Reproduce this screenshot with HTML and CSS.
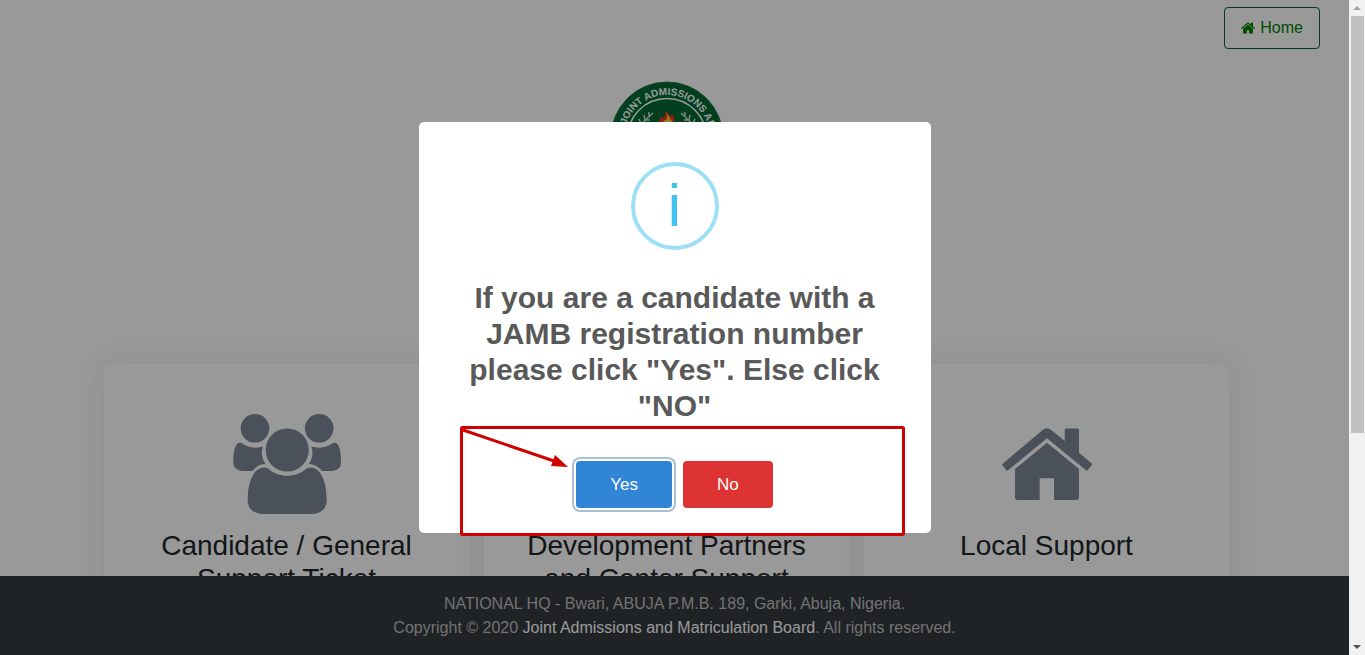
FILE: index.html
```html
<!DOCTYPE html>
<html lang="en">
<head>
<meta charset="utf-8">
<meta name="viewport" content="width=device-width, initial-scale=1">
<title>JAMB Support</title>
<link rel="stylesheet" href="styles.css">
</head>
<body>
<svg class="symbols" aria-hidden="true">
  <symbol id="house" viewBox="0 0 90 72">
    <path d="M1 35.5 41 1.8Q45 -1.4 49 1.8L62.7 13V1.5Q62.700 .5 64 .5H76Q77 .5 77 1.500V24.700L89.500 35.200Q90.300 36 89.700 36.900L85.800 42Q85 43 84 42.200L45 10.300 6 42.200Q5 43 4.200 42L.4 37.200Q-.2 36.300 1 35.500Z"/>
    <path d="M45 14.700 77 41V69Q77 72 74 72H52V50.300H37.700V72H16Q13 72 13 69V41Z"/>
  </symbol>
</svg>
<div class="window">
  <div class="page">
    <nav class="topbar">
      <a class="home-link" href="#"><svg class="home-icon" aria-hidden="true"><use href="#house"/></svg>Home</a>
    </nav>
    <main class="content">
      <div class="container">
        <svg class="logo" viewBox="0 0 114 114" role="img" aria-label="JAMB logo">
          <defs><path id="ring" d="M57 100A43 43 0 1 1 57.100 100"/></defs>
          <circle cx="57" cy="57" r="56" fill="#006b35" stroke="#347653"/>
          <circle cx="57" cy="57" r="39.500" fill="none" stroke="#fff" stroke-width="1.500"/>
          <text class="logo-text"><textPath href="#ring" startOffset="52%" text-anchor="middle">JOINT ADMISSIONS AND</textPath></text>
          <path d="M49 44Q48 38 52 35L53 38Q56 35 55 30Q60 32 60 36L62 33Q66 38 63 45Z" fill="#ed3524"/>
          <path d="M52 43Q52 40 56 39Q58 37 57 33Q61 37 60 40L62 38V45H52Z" fill="#ffd22e"/>
          <g class="laurel">
            <path d="M28 46 43 32M31 43 29 38M35 39 34 34M39 35 39 31M31 43 36 43M35 39 40 39"/>
            <path d="M86 46 71 32M83 43 85 38M79 39 80 34M75 35 75 31M83 43 78 43M79 39 74 39"/>
          </g>
        </svg>
        <section class="cards">
          <article class="card">
            <div class="card-icon">
              <svg class="icon-users" viewBox="0 0 108 100" aria-hidden="true">
                <circle cx="22" cy="14.300" r="14.300"/><circle cx="86.200" cy="14.300" r="14.300"/>
                <circle cx="54.200" cy="36" r="21.600"/>
                <path d="M6 28.800Q8 28.400 10 30C16 34 24 34.500 30 32.600Q27 42 32.500 50Q25 50 19.500 57H9Q.3 56 .3 48.500C.3 40 1.500 30 6 28.800Z"/>
                <path d="M102.400 28.800Q100.400 28.400 98.400 30C92.400 34 84.400 34.500 78.400 32.600Q81.400 42 75.900 50Q83.400 50 88.900 57H99.400Q108 56 108 48.500C108 40 106.900 30 102.400 28.800Z"/>
                <path d="M29 53.700Q32.500 53.200 35 54.500C46 64.200 62.500 64.200 73.500 54.500Q76 53.200 79.500 53.700C89 55.500 93.700 70 93.700 86Q93.700 98.500 80 100H28.500Q14.700 98.500 14.700 86C14.700 70 19.500 55.500 29 53.700Z"/>
              </svg>
            </div>
            <h3 class="card-title">Candidate / General Support Ticket</h3>
          </article>
          <article class="card">
            <div class="card-icon"></div>
            <h3 class="card-title">Development Partners and Center Support</h3>
          </article>
          <article class="card">
            <div class="card-icon"><svg class="icon-house" aria-hidden="true"><use href="#house"/></svg></div>
            <h3 class="card-title">Local Support</h3>
          </article>
        </section>
      </div>
    </main>
    <footer class="footer">
      <div>NATIONAL HQ - Bwari, ABUJA P.M.B. 189, Garki, Abuja, Nigeria.</div>
      <div>Copyright © 2020 <a class="footer-link" href="#">Joint Admissions and Matriculation Board</a>. All rights reserved.</div>
    </footer>
    <div class="overlay">
      <div class="dialog" role="dialog" aria-modal="true" aria-labelledby="dialog-title">
        <div class="dialog-icon" aria-hidden="true">i</div>
        <h2 class="dialog-title" id="dialog-title">If you are a candidate with a JAMB registration number please click "Yes". Else click "NO"</h2>
        <div class="actions">
          <button class="btn btn-yes" type="button">Yes</button>
          <button class="btn btn-no" type="button">No</button>
        </div>
        <svg class="callout" viewBox="0 0 445 110" aria-hidden="true">
          <rect x="1.500" y="1.500" width="442" height="107" rx="1" fill="none" stroke="#d00000" stroke-width="3"/>
          <path d="M3 4 94 35" stroke="#d00000" stroke-width="3"/>
          <path d="M108 41 95 29 91 40Z" fill="#d00000"/>
        </svg>
      </div>
    </div>
  </div>
  <div class="scrollbar" aria-hidden="true">
    <span class="arrow arrow-up"></span>
    <span class="track"><span class="thumb"></span></span>
    <span class="arrow arrow-down"></span>
  </div>
</div>
</body>
</html>
```
FILE: styles.css
```css
* { box-sizing: border-box; }
body {
  margin: 0;
  font: 16px/24px "Liberation Sans", Arial, sans-serif;
  color: #212529;
  background: #fff;
}
.symbols { display: none; }
.window { display: flex; height: 100vh; overflow: hidden; }
.page {
  position: relative;
  flex: 1;
  min-width: 0;
  display: flex;
  flex-direction: column;
}
.topbar { display: flex; justify-content: flex-end; padding: 7px 29px 0; }
.home-link {
  display: flex;
  align-items: center;
  gap: 5px;
  padding: 8px 16px;
  border: 1px solid #006633;
  border-radius: 4px;
  color: #008000;
  text-decoration: none;
}
.home-icon { width: 14px; height: 12px; fill: #008000; }
.content { flex: 1; min-height: 0; overflow: hidden; }
.container {
  max-width: 1125px;
  margin: 0 auto;
  padding-top: 32px;
}
@media (min-width: 1200px) {
  .content { padding-right: 16px; }
}
.logo { display: block; width: 114px; height: 114px; margin: 0 auto; }
.logo-text { font-size: 10px; font-weight: 700; fill: #fff; }
.laurel { fill: none; stroke: #cfe0d6; stroke-width: 1.5; }
.cards {
  display: grid;
  grid-template-columns: repeat(3, 1fr);
  gap: 15px;
  margin-top: 169px;
}
.card {
  padding: 50px 30px;
  border-radius: 8px;
  background: #fff;
  text-align: center;
  box-shadow: 0 0 30px rgba(0, 0, 0, 0.08);
}
.card-icon {
  display: flex;
  align-items: center;
  justify-content: center;
  height: 100px;
  margin-bottom: 15px;
  fill: #7c8798;
}
.icon-users { width: 108px; height: 100px; }
.icon-house { width: 90px; height: 72px; }
.card-title { margin: 0; font-size: 28px; line-height: 33px; font-weight: 400; }
.footer {
  padding: 16px 16px 15px;
  background: #353b40;
  color: #bfbfbf;
  text-align: center;
}
.footer-link { color: #fff; text-decoration: none; }
.overlay {
  position: absolute;
  inset: 0;
  display: flex;
  align-items: center;
  justify-content: center;
  background: rgba(0, 0, 0, 0.4);
}
.dialog {
  position: relative;
  width: 512px;
  padding: 40px 20px 25px;
  border-radius: 5px;
  background: #fff;
  text-align: center;
}
.dialog-icon {
  width: 88px;
  height: 88px;
  margin: 0 auto 30px;
  border: 4px solid #9de0f6;
  border-radius: 50%;
  color: #3fc3ee;
  font-size: 60px;
  line-height: 80px;
}
.dialog-title {
  margin: 0 0 12px;
  padding: 0 20px;
  color: #595959;
  font-size: 30px;
  line-height: 36px;
}
.actions { display: flex; justify-content: center; gap: 11px; margin-top: 37px; }
.btn {
  padding: 11px 34px;
  border: 0;
  border-radius: 4px;
  color: #fff;
  font: 17px/25px "Liberation Sans", Arial, sans-serif;
}
.btn-yes { background: #3085d6; box-shadow: 0 0 0 2px #fff, 0 0 0 4px #a9bfd8; }
.btn-no { background: #dd3333; }
.callout { position: absolute; left: 41px; top: 304px; width: 445px; height: 110px; pointer-events: none; }
.scrollbar {
  display: flex;
  flex-direction: column;
  align-items: center;
  justify-content: space-between;
  width: 16px;
  padding: 6px 0;
  background: #f1f1f1;
}
.arrow { border: 4px solid transparent; }
.arrow-up { border-top: 0; border-bottom-color: #a3a3a3; }
.arrow-down { border-bottom: 0; border-top-color: #505050; }
.track { flex: 1; width: 13px; margin: 6px 0; }
.thumb { display: block; height: 67%; background: #c1c1c1; }
```
